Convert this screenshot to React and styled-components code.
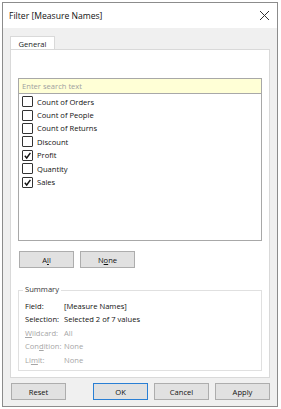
import React from "react";
import styled, { createGlobalStyle } from "styled-components";

const Global = createGlobalStyle`
  html, body { margin: 0; padding: 0; background: #ffffff; }
  body { font-family: "Open Sans", "Noto Sans", sans-serif; color: #111; }
`;

const items = [
  { label: "Count of Orders", checked: false },
  { label: "Count of People", checked: false },
  { label: "Count of Returns", checked: false },
  { label: "Discount", checked: false },
  { label: "Profit", checked: true },
  { label: "Quantity", checked: false },
  { label: "Sales", checked: true },
];

const summary = [
  { key: "Field:", value: "[Measure Names]" },
  { key: "Selection:", value: "Selected 2 of 7 values" },
  { key: <><u>W</u>ildcard:</>, value: "All", dim: true },
  { key: <>Con<u>d</u>ition:</>, value: "None", dim: true },
  { key: <>Li<u>m</u>it:</>, value: "None", dim: true },
];

export default function App() {
  return (
    <>
      <Global />
      <Page>
        <Window>
          <TitleBar>
            <Title>Filter [Measure Names]</Title>
            <Close>
              <svg width="11" height="11" viewBox="0 0 11 11">
                <path d="M1 1 L10 10 M10 1 L1 10" stroke="#333" strokeWidth="1" />
              </svg>
            </Close>
          </TitleBar>
          <Body>
            <Tabs>
              <Tab>General</Tab>
            </Tabs>
            <Panel>
              <Search placeholder="Enter search text" />
              <List>
                {items.map((it) => (
                  <Item key={it.label}>
                    <Box>
                      {it.checked && (
                        <svg width="9" height="9" viewBox="0 0 9 9">
                          <path d="M1.8 4.8 L3.7 7 L7.4 1.8" stroke="#111" strokeWidth="1.4" fill="none" />
                        </svg>
                      )}
                    </Box>
                    {it.label}
                  </Item>
                ))}
              </List>
              <ButtonRow>
                <Button>A<u>l</u>l</Button>
                <Button>N<u>o</u>ne</Button>
              </ButtonRow>
              <Group>
                <Legend>Summary</Legend>
                {summary.map((r, i) => (
                  <SumRow key={i} $dim={r.dim}>
                    <SumKey>{r.key}</SumKey>
                    <span>{r.value}</span>
                  </SumRow>
                ))}
              </Group>
            </Panel>
            <Footer>
              <Button>Reset</Button>
              <Spacer />
              <Button $primary>OK</Button>
              <Button>Cancel</Button>
              <Button>Apply</Button>
            </Footer>
          </Body>
        </Window>
      </Page>
    </>
  );
}

const Page = styled.div`
  padding: 2px 2px 0 2px;
  width: 281px;
  height: 409px;
  box-sizing: border-box;
`;

const Window = styled.div`
  width: 276px;
  height: 405px;
  box-sizing: border-box;
  border: 1px solid #8c8c8c;
  display: flex;
  flex-direction: column;
  background: #f0f0f0;
`;

const TitleBar = styled.div`
  height: 26px;
  background: #ffffff;
  display: flex;
  align-items: center;
  justify-content: space-between;
  padding: 0 7px 0 6px;
`;

const Title = styled.div`
  font-size: 8.6px;
  color: #111;
`;

const Close = styled.div`
  display: flex;
  align-items: center;
`;

const Body = styled.div`
  flex: 1;
  padding: 8px 7px 6px 7px;
  display: flex;
  flex-direction: column;
`;

const Tabs = styled.div`
  display: flex;
  height: 13px;
`;

const Tab = styled.div`
  width: 43px;
  background: #ffffff;
  border: 1px solid #d9d9d9;
  border-bottom: none;
  font-size: 7.6px;
  line-height: 14px;
  text-align: center;
  color: #222;
`;

const Panel = styled.div`
  height: 329px;
  box-sizing: border-box;
  background: #ffffff;
  border: 1px solid #d9d9d9;
  padding: 28px 7px 0 7px;
  display: flex;
  flex-direction: column;
`;

const Search = styled.input`
  height: 15px;
  box-sizing: border-box;
  border: 1px solid #a8a8a8;
  border-bottom: none;
  background: #ffffd6;
  font-family: "Open Sans", sans-serif;
  font-size: 7.6px;
  padding: 0 3px;
  outline: none;
  &::placeholder { color: #a0a0a0; }
`;

const List = styled.div`
  height: 148px;
  box-sizing: border-box;
  border: 1px solid #a8a8a8;
  padding: 1px 3px;
  display: flex;
  flex-direction: column;
`;

const Item = styled.div`
  height: 13.4px;
  display: flex;
  align-items: center;
  gap: 3px;
  font-size: 7.6px;
  color: #111;
`;

const Box = styled.div`
  width: 11px;
  height: 11px;
  border: 1px solid #333;
  border-radius: 1px;
  box-sizing: border-box;
  display: flex;
  align-items: center;
  justify-content: center;
  flex-shrink: 0;
  margin-right: 1px;
`;

const ButtonRow = styled.div`
  display: flex;
  gap: 6px;
  margin-top: 10px;
  padding-left: 1px;
`;

const Button = styled.button`
  width: 55px;
  height: 17px;
  box-sizing: border-box;
  background: #e1e1e1;
  border: 1px solid ${(p) => (p.$primary ? "#2a7fd4" : "#adadad")};
  font-family: "Open Sans", sans-serif;
  font-size: 7.6px;
  color: #111;
  padding: 0;
`;

const Group = styled.div`
  position: relative;
  margin-top: 22px;
  height: 81px;
  box-sizing: border-box;
  border: 1px solid #e0e0e0;
  padding: 8px 6px 0 6px;
  display: flex;
  flex-direction: column;
`;

const Legend = styled.span`
  position: absolute;
  top: -7px;
  left: 4px;
  padding: 0 2px;
  background: #ffffff;
  font-size: 7.6px;
  color: #333;
`;

const SumRow = styled.div`
  display: flex;
  height: 13.5px;
  align-items: center;
  font-size: 7.6px;
  white-space: nowrap;
  color: ${(p) => (p.$dim ? "#a6a6a6" : "#111")};
`;

const SumKey = styled.span`
  width: 39px;
`;

const Footer = styled.div`
  display: flex;
  gap: 6px;
  margin-top: 5px;
  padding-left: 1px;
`;

const Spacer = styled.div`
  flex: 1;
`;
